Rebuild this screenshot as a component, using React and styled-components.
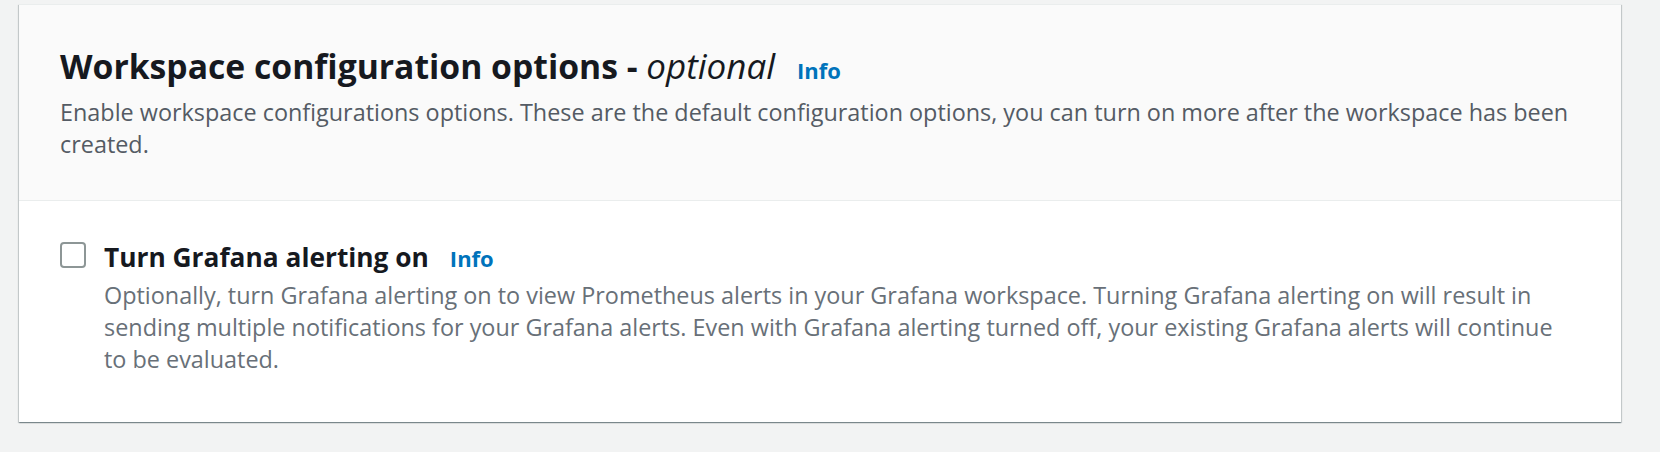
import React from "react";
import styled, { createGlobalStyle } from "styled-components";

const GlobalStyle = createGlobalStyle`
  html, body {
    margin: 0;
    padding: 0;
    background: #f2f3f3;
    font-family: "Open Sans", "Noto Sans", sans-serif;
    -webkit-font-smoothing: antialiased;
  }
`;

const Page = styled.div`
  padding: 4px 39px 30px 19px;
`;

const Container = styled.section`
  background: #ffffff;
  box-shadow: 0 1px 1px 0 rgba(0, 28, 36, 0.3),
    1px 1px 1px 0 rgba(0, 28, 36, 0.15),
    -1px 1px 1px 0 rgba(0, 28, 36, 0.15);
  border-top: 1px solid #eaeded;
`;

const Header = styled.header`
  background: #fafafa;
  border-bottom: 1px solid #eaeded;
  padding: 41px 46px 40px 41px;
`;

const TitleRow = styled.div`
  display: flex;
  align-items: baseline;
  gap: 22px;
`;

const Title = styled.h2`
  margin: 0;
  font-size: 33.7px;
  line-height: 40px;
  font-weight: 700;
  color: #16191f;
`;

const Optional = styled.i`
  font-weight: 400;
  font-size: 35px;
`;

const InfoLink = styled.a`
  font-size: 22px;
  font-weight: 700;
  color: #0073bb;
  text-decoration: none;
  cursor: pointer;
`;

const Description = styled.p`
  margin: ${(p) => p.$gap || 0}px 0 0;
  font-size: 23.4px;
  line-height: 32px;
  color: ${(p) => p.$color || "#545b64"};
`;

const Body = styled.div`
  padding: 40px 46px 47px 41px;
`;

const CheckRow = styled.label`
  display: flex;
  align-items: flex-start;
  gap: 18px;
  cursor: pointer;
`;

const Box = styled.span`
  flex: none;
  box-sizing: border-box;
  width: 26px;
  height: 26px;
  margin-top: 1px;
  border: 2px solid #8d9696;
  border-radius: 4px;
  background: #ffffff;
`;

const CheckText = styled.div`
  flex: 1;
`;

const LabelRow = styled.div`
  display: flex;
  align-items: baseline;
  gap: 21px;
`;

const Label = styled.span`
  font-size: 26.3px;
  line-height: 32px;
  font-weight: 700;
  color: #16191f;
`;

export default function App() {
  return (
    <>
      <GlobalStyle />
      <Page>
        <Container>
          <Header>
            <TitleRow>
              <Title>
                Workspace configuration options - <Optional>optional</Optional>
              </Title>
              <InfoLink>Info</InfoLink>
            </TitleRow>
            <Description $gap={10}>
              Enable workspace configurations options. These are the default configuration options, you can turn on
              more after the workspace has been created.
            </Description>
          </Header>
          <Body>
            <CheckRow>
              <Box role="checkbox" aria-checked="false" />
              <CheckText>
                <LabelRow>
                  <Label>Turn Grafana alerting on</Label>
                  <InfoLink>Info</InfoLink>
                </LabelRow>
                <Description $gap={6} $color="#687078">
                  Optionally, turn Grafana alerting on to view Prometheus alerts in your Grafana workspace. Turning
                  Grafana alerting on will result in sending multiple notifications for your Grafana alerts. Even with
                  Grafana alerting turned off, your existing Grafana alerts will continue to be evaluated.
                </Description>
              </CheckText>
            </CheckRow>
          </Body>
        </Container>
      </Page>
    </>
  );
}
